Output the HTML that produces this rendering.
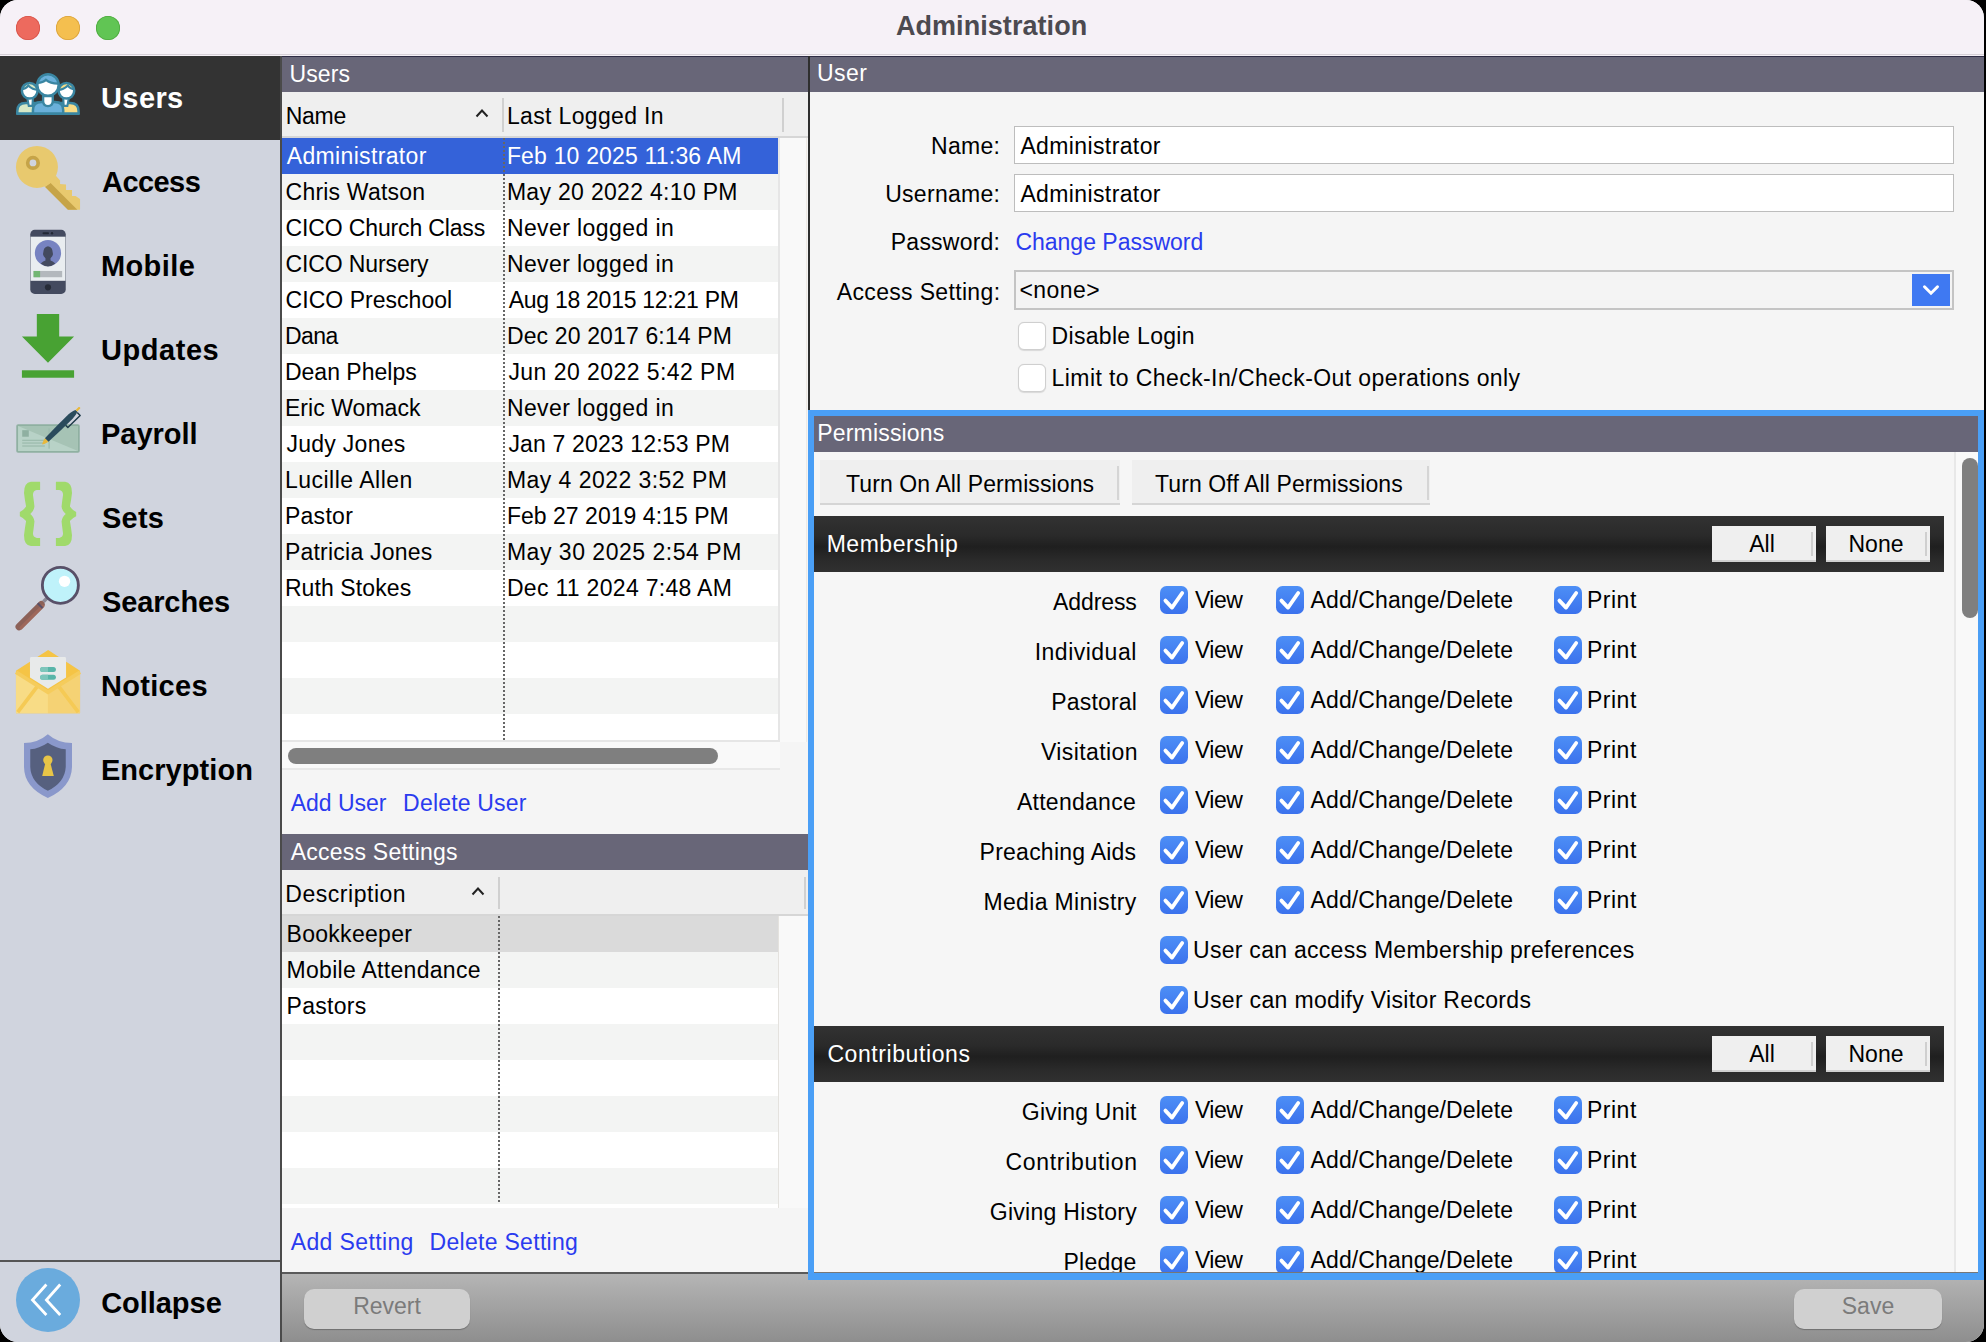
<!DOCTYPE html><html><head><meta charset="utf-8"><style>
*{margin:0;padding:0;box-sizing:border-box}
html,body{width:1986px;height:1342px;overflow:hidden;background:#000}
body{font-family:"Liberation Sans",sans-serif;position:relative}
#win{position:absolute;left:0;top:0;width:1984px;height:1342px;border-radius:18px;overflow:hidden;background:#f5f5f5}
.t{position:absolute;white-space:nowrap}
.r{position:absolute}
svg{position:absolute;overflow:visible}
</style></head><body><div id="win">
<div class="r" style="left:0px;top:0px;width:1984px;height:54px;background:#f6f1f7;"></div>
<div class="r" style="left:0px;top:54px;width:1984px;height:1px;background:#d6d0d7;"></div>
<div class="r" style="left:0px;top:55px;width:1984px;height:1px;background:#f6f1f7;"></div>
<div class="r" style="left:16px;top:16px;width:24px;height:24px;border-radius:50%;background:#ed6a5e;box-shadow:inset 0 0 0 0.8px #d6544a"></div>
<div class="r" style="left:56px;top:16px;width:24px;height:24px;border-radius:50%;background:#f4bf4f;box-shadow:inset 0 0 0 0.8px #d9a23c"></div>
<div class="r" style="left:96px;top:16px;width:24px;height:24px;border-radius:50%;background:#61c554;box-shadow:inset 0 0 0 0.8px #4ea93f"></div>
<div class="t" style="left:895.895652173913px;top:13.1px;font-size:27px;line-height:27px;color:#4c4a50;font-weight:bold;letter-spacing:0.065px;">Administration</div>
<div class="r" style="left:0px;top:56px;width:280px;height:1286px;background:#d0d4de;"></div>
<div class="r" style="left:0px;top:56px;width:280px;height:84px;background:#333333;"></div>
<div class="r" style="left:280px;top:56px;width:2px;height:1286px;background:#4a4a4a;"></div>
<div class="r" style="left:0px;top:1260px;width:280px;height:2px;background:#555555;"></div>
<div class="t" style="left:101.03478260869565px;top:83.9px;font-size:29px;line-height:29px;color:#fff;font-weight:bold;letter-spacing:0.389px;">Users</div>
<div class="t" style="left:102.04347826086956px;top:167.9px;font-size:29px;line-height:29px;color:#000;font-weight:bold;letter-spacing:-0.562px;">Access</div>
<div class="t" style="left:100.9086956521739px;top:251.9px;font-size:29px;line-height:29px;color:#000;font-weight:bold;letter-spacing:0.422px;">Mobile</div>
<div class="t" style="left:101.03478260869565px;top:335.9px;font-size:29px;line-height:29px;color:#000;font-weight:bold;letter-spacing:0.54px;">Updates</div>
<div class="t" style="left:100.9086956521739px;top:419.9px;font-size:29px;line-height:29px;color:#000;font-weight:bold;">Payroll</div>
<div class="t" style="left:101.91739130434782px;top:503.9px;font-size:29px;line-height:29px;color:#000;font-weight:bold;letter-spacing:0.255px;">Sets</div>
<div class="t" style="left:101.91739130434782px;top:587.9px;font-size:29px;line-height:29px;color:#000;font-weight:bold;letter-spacing:-0.106px;">Searches</div>
<div class="t" style="left:100.9086956521739px;top:671.9px;font-size:29px;line-height:29px;color:#000;font-weight:bold;letter-spacing:0.329px;">Notices</div>
<div class="t" style="left:100.9086956521739px;top:755.9px;font-size:29px;line-height:29px;color:#000;font-weight:bold;letter-spacing:0.058px;">Encryption</div>
<div class="t" style="left:101.16521739130434px;top:1288.9px;font-size:29px;line-height:29px;color:#000;font-weight:bold;letter-spacing:-0.039px;">Collapse</div>
<svg style="left:10px;top:60px" width="80" height="70" viewBox="0 0 1534 1342">
<defs>
<clipPath id="hl"><circle cx="378" cy="590" r="150"/></clipPath>
<clipPath id="hr"><circle cx="1082" cy="590" r="150"/></clipPath>
<clipPath id="hc"><circle cx="728" cy="480" r="205"/></clipPath>
</defs>
<path d="M140 1030 L140 980 Q140 825 300 825 L520 825 L520 1030 Z" fill="#d6e8c6" stroke="#3a86a2" stroke-width="48" stroke-linejoin="round"/>
<path d="M1315 1030 L1315 980 Q1315 825 1155 825 L940 825 L940 1030 Z" fill="#f8dc86" stroke="#3a86a2" stroke-width="48" stroke-linejoin="round"/>
<path d="M330 720 L360 880 L430 880 L440 720 Z" fill="#fff" stroke="#3a86a2" stroke-width="40"/>
<path d="M1130 720 L1100 880 L1030 880 L1020 720 Z" fill="#fff" stroke="#3a86a2" stroke-width="40"/>
<circle cx="378" cy="590" r="150" fill="#fff"/>
<path clip-path="url(#hl)" d="M200 300 L560 300 L560 575 Q440 580 350 490 Q300 560 200 560 Z" fill="#d6e8c6" stroke="#3a86a2" stroke-width="40"/>
<circle cx="378" cy="590" r="150" fill="none" stroke="#3a86a2" stroke-width="48"/>
<circle cx="1082" cy="590" r="150" fill="#fff"/>
<path clip-path="url(#hr)" d="M900 300 L1260 300 L1260 560 Q1160 560 1110 490 Q1020 580 900 575 Z" fill="#f8dc86" stroke="#3a86a2" stroke-width="40"/>
<circle cx="1082" cy="590" r="150" fill="none" stroke="#3a86a2" stroke-width="48"/>
<path d="M440 1030 L440 960 Q440 805 600 805 L860 805 Q1020 805 1020 960 L1020 1030 Z" fill="#6ab0da" stroke="#3a86a2" stroke-width="48" stroke-linejoin="round"/>
<path d="M635 690 L635 790 Q640 880 728 885 Q815 880 820 790 L820 690 Z" fill="#fff" stroke="#3a86a2" stroke-width="45"/>
<circle cx="728" cy="480" r="205" fill="#fff"/>
<path clip-path="url(#hc)" d="M500 250 L960 250 L960 450 Q780 460 690 380 Q640 440 500 440 Z" fill="#6ab0da" stroke="#3a86a2" stroke-width="42"/>
<circle cx="728" cy="480" r="205" fill="none" stroke="#3a86a2" stroke-width="48"/>
<rect x="115" y="1005" width="1225" height="45" rx="20" fill="#3a86a2"/>
</svg>
<svg style="left:10px;top:140px" width="80" height="80" viewBox="0 0 1342 1342">
<path d="M560 760 L980 1170 L1175 1170 L1175 990 L1100 940 L1040 940 L1040 840 L940 840 L940 745 L840 740 L840 680 L770 600 Z" fill="#e8c96e"/>
<path d="M590 790 L680 720 L1130 1170 L970 1170 Z" fill="#c6a448"/>
<circle cx="452" cy="452" r="352" fill="#e8c96e"/>
<circle cx="385" cy="385" r="88" fill="#d0d4de" stroke="#c6a448" stroke-width="62"/>
</svg>
<svg style="left:10px;top:220px" width="80" height="80" viewBox="0 0 1342 1342">
<rect x="340" y="165" width="595" height="1075" rx="75" fill="#434a5f"/>
<rect x="345" y="280" width="585" height="740" fill="#e9edf0"/>
<rect x="545" y="205" width="110" height="35" rx="17" fill="#222835"/>
<circle cx="705" cy="222" r="20" fill="#222835"/>
<circle cx="637" cy="555" r="220" fill="#7783c1"/>
<path d="M515 730 Q560 690 595 680 L595 640 Q550 610 555 560 Q560 450 637 440 Q715 450 720 560 Q725 610 680 640 L680 680 Q715 690 760 730 Q700 780 637 780 Q575 780 515 730 Z" fill="#434a5f"/>
<rect x="395" y="855" width="480" height="105" fill="#b3b8bd"/>
<rect x="395" y="855" width="110" height="105" fill="#72b673"/>
<circle cx="637" cy="1130" r="52" fill="#262b37"/>
</svg>
<svg style="left:10px;top:305px" width="80" height="80" viewBox="0 0 1342 1342">
<path d="M450 150 L825 150 L825 530 L1075 530 L637 970 L200 530 L450 530 Z" fill="#48a233"/>
<rect x="200" y="1095" width="875" height="125" fill="#48a233"/>
</svg>
<svg style="left:10px;top:395px" width="80" height="80" viewBox="0 0 1342 1342">
<rect x="105" y="490" width="1065" height="480" rx="30" fill="#8fb0a1"/>
<rect x="135" y="520" width="1005" height="420" fill="#b8d2c7"/>
<path d="M135 520 L1140 520 L1140 940 Z" fill="#a6c3b5"/>
<rect x="205" y="590" width="110" height="110" fill="#8fb0a1"/>
<rect x="205" y="750" width="380" height="22" fill="#9dbcae"/>
<rect x="205" y="795" width="380" height="22" fill="#9dbcae"/>
<rect x="205" y="845" width="380" height="22" fill="#9dbcae"/>
<rect x="645" y="560" width="22" height="340" fill="#9dbcae"/>
<g transform="translate(615,755) rotate(-44.5)">
<path d="M400 45 L400 100 L690 100 L690 30" fill="none" stroke="#1f3a49" stroke-width="24" stroke-linejoin="round"/>
<path d="M0 -42 Q300 -55 560 -52 Q660 -45 700 -20 L700 20 Q660 45 560 52 Q300 55 0 42 Z" fill="#2a4b5c"/>
<path d="M0 -42 Q-60 -30 -100 -5 L-100 5 Q-60 30 0 42 Z" fill="#e8b83a"/>
<path d="M700 -20 L770 -18 Q800 0 770 18 L700 20 Z" fill="#e8b83a"/>
</g>
</svg>
<svg style="left:10px;top:475px" width="80" height="80" viewBox="0 0 1342 1342">
<path d="M505 115 L350 115 Q235 130 235 300 Q250 430 270 530 Q230 590 165 620 L165 690 Q230 720 270 770 Q250 880 235 1010 Q235 1180 350 1190 L505 1190 L505 1055 L450 1055 Q385 1040 385 980 Q400 880 410 780 Q400 700 340 655 Q400 610 410 530 Q400 430 385 330 Q385 260 450 250 L505 250 Z" fill="#a0da6b"/>
<path d="M770 115 L925 115 Q1040 130 1040 300 Q1025 430 1005 530 Q1045 590 1110 620 L1110 690 Q1045 720 1005 770 Q1025 880 1040 1010 Q1040 1180 925 1190 L770 1190 L770 1055 L825 1055 Q890 1040 890 980 Q875 880 865 780 Q875 700 935 655 Q875 610 865 530 Q875 430 890 330 Q890 260 825 250 L770 250 Z" fill="#a0da6b"/>
</svg>
<svg style="left:10px;top:560px" width="80" height="80" viewBox="0 0 1342 1342">
<line x1="560" y1="700" x2="640" y2="620" stroke="#8c8a97" stroke-width="60"/>
<line x1="150" y1="1120" x2="525" y2="745" stroke="#8c6158" stroke-width="115" stroke-linecap="round"/>
<line x1="185" y1="1140" x2="550" y2="775" stroke="#9e685b" stroke-width="55" stroke-linecap="round"/>
<line x1="465" y1="725" x2="545" y2="805" stroke="#585068" stroke-width="35"/>
<circle cx="845" cy="425" r="302" fill="#bff2fa" stroke="#585068" stroke-width="48"/>
<circle cx="915" cy="358" r="95" fill="#fff"/>
</svg>
<svg style="left:10px;top:645px" width="80" height="80" viewBox="0 0 1342 1342">
<defs><clipPath id="pl"><rect x="0" y="0" width="637" height="1342"/></clipPath></defs>
<path d="M100 430 L640 85 L1175 430 L1175 1145 L100 1145 Z" fill="#f5c445"/>
<path d="M335 225 Q335 200 360 200 L915 200 Q940 200 940 225 L940 545 L637 735 L335 545 Z" fill="#e8eaea"/>
<rect x="505" y="370" width="265" height="85" rx="42" fill="#58b5a8"/>
<rect x="505" y="500" width="265" height="85" rx="42" fill="#58b5a8"/>
<g clip-path="url(#pl)"><rect x="505" y="370" width="265" height="85" rx="42" fill="#7dc6bb"/><rect x="505" y="500" width="265" height="85" rx="42" fill="#7dc6bb"/></g>
<path d="M100 445 L637 800 L637 1145 L100 1145 Z" fill="#f8dc86"/>
<path d="M637 800 L1175 445 L1175 1145 L637 1145 Z" fill="#f5d274"/>
<path d="M130 1125 L455 700 M1145 1125 L820 700" fill="none" stroke="#f5ca55" stroke-width="62"/>
<path d="M100 455 L637 795 L1175 455" fill="none" stroke="#f5cc5c" stroke-width="62"/>
</svg>
<svg style="left:10px;top:730px" width="80" height="80" viewBox="0 0 1342 1342">
<path d="M635 70 Q470 215 235 220 L235 620 Q240 960 635 1140 Q1030 960 1040 620 L1040 220 Q800 215 635 70 Z" fill="#8a98cb"/>
<path d="M635 215 Q490 315 340 325 L340 620 Q350 880 635 1020 Q920 880 935 620 L935 325 Q780 315 635 215 Z" fill="#56607f"/>
<circle cx="635" cy="505" r="78" fill="#e8c547"/>
<path d="M595 545 L675 545 L735 770 L540 770 Z" fill="#e8c547"/>
</svg>
<svg style="left:16px;top:1268px" width="64" height="64" viewBox="0 0 64 64">
<circle cx="32" cy="32" r="32" fill="#6aabdd"/>
<path d="M30.4 16.5 L16.5 32 L30.4 47 M44.2 16.5 L30.4 32 L44.2 47" fill="none" stroke="#fff" stroke-width="2.8"/>
</svg>
<div class="r" style="left:282px;top:56px;width:526px;height:1216px;background:#f5f5f5;"></div>
<div class="r" style="left:282px;top:56px;width:526px;height:1px;background:#2f2c45;"></div>
<div class="r" style="left:282px;top:57px;width:526px;height:35px;background:#686678;"></div>
<div class="t" style="left:289.4px;top:62.5px;font-size:23px;line-height:23px;color:#fff;letter-spacing:0.15px;">Users</div>
<div class="r" style="left:282px;top:92px;width:526px;height:44px;background:#efefef;"></div>
<div class="r" style="left:282px;top:136px;width:526px;height:2px;background:#d6d6d6;"></div>
<div class="r" style="left:502px;top:98px;width:2px;height:34px;background:#d0d0d0;"></div>
<div class="r" style="left:782px;top:98px;width:2px;height:34px;background:#d0d0d0;"></div>
<div class="t" style="left:285.8px;top:104.5px;font-size:23px;line-height:23px;color:#000;letter-spacing:-0.3px;">Name</div>
<div class="t" style="left:507.0px;top:104.5px;font-size:23px;line-height:23px;color:#000;letter-spacing:0.331px;">Last Logged In</div>
<svg style="left:475px;top:108px" width="14" height="10" viewBox="0 0 14 10"><path d="M1.5 8.5 L7 2.5 L12.5 8.5" fill="none" stroke="#222" stroke-width="2"/></svg>
<div class="r" style="left:282px;top:138px;width:496px;height:602px;background:#ffffff;"></div>
<div class="r" style="left:780px;top:138px;width:27px;height:604px;background:#f9f9f9;"></div>
<div class="r" style="left:806px;top:138px;width:1px;height:604px;background:#eeeae5;"></div>
<div class="r" style="left:282px;top:138px;width:496px;height:36px;background:#3462d9;"></div>
<div class="t" style="left:286.7px;top:144.9px;font-size:23px;line-height:23px;color:#fff;letter-spacing:0.35px;">Administrator</div>
<div class="t" style="left:506.90000000000003px;top:144.9px;font-size:23px;line-height:23px;color:#fff;letter-spacing:0.179px;">Feb 10 2025 11:36 AM</div>
<div class="r" style="left:282px;top:174px;width:496px;height:36px;background:#f3f4f3;"></div>
<div class="t" style="left:285.6px;top:180.9px;font-size:23px;line-height:23px;color:#000;letter-spacing:0.2px;">Chris Watson</div>
<div class="t" style="left:506.90000000000003px;top:180.9px;font-size:23px;line-height:23px;color:#000;letter-spacing:0.311px;">May 20 2022 4:10 PM</div>
<div class="r" style="left:282px;top:210px;width:496px;height:36px;background:#ffffff;"></div>
<div class="t" style="left:285.6px;top:216.9px;font-size:23px;line-height:23px;color:#000;letter-spacing:-0.144px;">CICO Church Class</div>
<div class="t" style="left:506.90000000000003px;top:216.9px;font-size:23px;line-height:23px;color:#000;letter-spacing:0.407px;">Never logged in</div>
<div class="r" style="left:282px;top:246px;width:496px;height:36px;background:#f3f4f3;"></div>
<div class="t" style="left:285.6px;top:252.9px;font-size:23px;line-height:23px;color:#000;letter-spacing:-0.127px;">CICO Nursery</div>
<div class="t" style="left:506.90000000000003px;top:252.9px;font-size:23px;line-height:23px;color:#000;letter-spacing:0.407px;">Never logged in</div>
<div class="r" style="left:282px;top:282px;width:496px;height:36px;background:#ffffff;"></div>
<div class="t" style="left:285.6px;top:288.9px;font-size:23px;line-height:23px;color:#000;letter-spacing:0.031px;">CICO Preschool</div>
<div class="t" style="left:508.7px;top:288.9px;font-size:23px;line-height:23px;color:#000;letter-spacing:-0.268px;">Aug 18 2015 12:21 PM</div>
<div class="r" style="left:282px;top:318px;width:496px;height:36px;background:#f3f4f3;"></div>
<div class="t" style="left:284.90000000000003px;top:324.9px;font-size:23px;line-height:23px;color:#000;letter-spacing:-0.5px;">Dana</div>
<div class="t" style="left:506.90000000000003px;top:324.9px;font-size:23px;line-height:23px;color:#000;letter-spacing:0.144px;">Dec 20 2017 6:14 PM</div>
<div class="r" style="left:282px;top:354px;width:496px;height:36px;background:#ffffff;"></div>
<div class="t" style="left:284.90000000000003px;top:360.9px;font-size:23px;line-height:23px;color:#000;letter-spacing:0.02px;">Dean Phelps</div>
<div class="t" style="left:508.40000000000003px;top:360.9px;font-size:23px;line-height:23px;color:#000;letter-spacing:0.444px;">Jun 20 2022 5:42 PM</div>
<div class="r" style="left:282px;top:390px;width:496px;height:36px;background:#f3f4f3;"></div>
<div class="t" style="left:284.90000000000003px;top:396.9px;font-size:23px;line-height:23px;color:#000;letter-spacing:0.06px;">Eric Womack</div>
<div class="t" style="left:506.90000000000003px;top:396.9px;font-size:23px;line-height:23px;color:#000;letter-spacing:0.407px;">Never logged in</div>
<div class="r" style="left:282px;top:426px;width:496px;height:36px;background:#ffffff;"></div>
<div class="t" style="left:286.40000000000003px;top:432.9px;font-size:23px;line-height:23px;color:#000;letter-spacing:0.289px;">Judy Jones</div>
<div class="t" style="left:508.40000000000003px;top:432.9px;font-size:23px;line-height:23px;color:#000;letter-spacing:0.161px;">Jan 7 2023 12:53 PM</div>
<div class="r" style="left:282px;top:462px;width:496px;height:36px;background:#f3f4f3;"></div>
<div class="t" style="left:284.90000000000003px;top:468.9px;font-size:23px;line-height:23px;color:#000;letter-spacing:0.5px;">Lucille Allen</div>
<div class="t" style="left:506.90000000000003px;top:468.9px;font-size:23px;line-height:23px;color:#000;letter-spacing:0.459px;">May 4 2022 3:52 PM</div>
<div class="r" style="left:282px;top:498px;width:496px;height:36px;background:#ffffff;"></div>
<div class="t" style="left:284.90000000000003px;top:504.9px;font-size:23px;line-height:23px;color:#000;letter-spacing:0.3px;">Pastor</div>
<div class="t" style="left:506.90000000000003px;top:504.9px;font-size:23px;line-height:23px;color:#000;letter-spacing:0.033px;">Feb 27 2019 4:15 PM</div>
<div class="r" style="left:282px;top:534px;width:496px;height:36px;background:#f3f4f3;"></div>
<div class="t" style="left:284.90000000000003px;top:540.9px;font-size:23px;line-height:23px;color:#000;letter-spacing:0.231px;">Patricia Jones</div>
<div class="t" style="left:506.90000000000003px;top:540.9px;font-size:23px;line-height:23px;color:#000;letter-spacing:0.522px;">May 30 2025 2:54 PM</div>
<div class="r" style="left:282px;top:570px;width:496px;height:36px;background:#ffffff;"></div>
<div class="t" style="left:284.90000000000003px;top:576.9px;font-size:23px;line-height:23px;color:#000;letter-spacing:0.1px;">Ruth Stokes</div>
<div class="t" style="left:506.90000000000003px;top:576.9px;font-size:23px;line-height:23px;color:#000;letter-spacing:0.306px;">Dec 11 2024 7:48 AM</div>
<div class="r" style="left:282px;top:606px;width:496px;height:36px;background:#f3f4f3;"></div>
<div class="r" style="left:282px;top:642px;width:496px;height:36px;background:#ffffff;"></div>
<div class="r" style="left:282px;top:678px;width:496px;height:36px;background:#f3f4f3;"></div>
<div class="r" style="left:282px;top:714px;width:496px;height:26px;background:#ffffff;"></div>
<div class="r" style="left:503px;top:138px;width:2px;height:602px;background:repeating-linear-gradient(to bottom,#666 0 2px,transparent 2px 4px)"></div>
<div class="r" style="left:778px;top:138px;width:2px;height:604px;background:#e6e6e6;"></div>
<div class="r" style="left:282px;top:740px;width:498px;height:2px;background:#e6e6e6;"></div>
<div class="r" style="left:282px;top:742px;width:498px;height:26px;background:#f9f9f9;"></div>
<div class="r" style="left:282px;top:768px;width:498px;height:2px;background:#e8e8e8;"></div>
<div class="r" style="left:288px;top:748px;width:430px;height:16px;border-radius:8px;background:#7f7f7f"></div>
<div class="t" style="left:290.79999999999995px;top:792.0px;font-size:23px;line-height:23px;color:#2a3bef;letter-spacing:-0.043px;">Add User</div>
<div class="t" style="left:403.1px;top:792.0px;font-size:23px;line-height:23px;color:#2a3bef;letter-spacing:0.19px;">Delete User</div>
<div class="r" style="left:282px;top:834px;width:526px;height:36px;background:#686678;"></div>
<div class="t" style="left:290.79999999999995px;top:840.5px;font-size:23px;line-height:23px;color:#fff;letter-spacing:0.221px;">Access Settings</div>
<div class="r" style="left:282px;top:870px;width:526px;height:44px;background:#efefef;"></div>
<div class="r" style="left:282px;top:914px;width:526px;height:2px;background:#d6d6d6;"></div>
<div class="r" style="left:498px;top:877px;width:2px;height:32px;background:#d0d0d0;"></div>
<div class="r" style="left:804px;top:877px;width:2px;height:32px;background:#d0d0d0;"></div>
<div class="t" style="left:285.3px;top:882.5px;font-size:23px;line-height:23px;color:#000;letter-spacing:0.53px;">Description</div>
<svg style="left:471px;top:886px" width="14" height="10" viewBox="0 0 14 10"><path d="M1.5 8.5 L7 2.5 L12.5 8.5" fill="none" stroke="#222" stroke-width="2"/></svg>
<div class="r" style="left:282px;top:916px;width:496px;height:290px;background:#ffffff;"></div>
<div class="r" style="left:778px;top:916px;width:30px;height:292px;background:#f9f9f9;"></div>
<div class="r" style="left:778px;top:916px;width:1px;height:292px;background:#e4e2de;"></div>
<div class="r" style="left:282px;top:916px;width:496px;height:36px;background:#dadada;"></div>
<div class="t" style="left:286.5px;top:923.2px;font-size:23px;line-height:23px;color:#000;letter-spacing:0.3px;">Bookkeeper</div>
<div class="r" style="left:282px;top:952px;width:496px;height:36px;background:#f3f4f3;"></div>
<div class="t" style="left:286.5px;top:959.2px;font-size:23px;line-height:23px;color:#000;letter-spacing:0.3px;">Mobile Attendance</div>
<div class="r" style="left:282px;top:988px;width:496px;height:36px;background:#ffffff;"></div>
<div class="t" style="left:286.5px;top:995.2px;font-size:23px;line-height:23px;color:#000;letter-spacing:0.3px;">Pastors</div>
<div class="r" style="left:282px;top:1024px;width:496px;height:36px;background:#f3f4f3;"></div>
<div class="r" style="left:282px;top:1060px;width:496px;height:36px;background:#ffffff;"></div>
<div class="r" style="left:282px;top:1096px;width:496px;height:36px;background:#f3f4f3;"></div>
<div class="r" style="left:282px;top:1132px;width:496px;height:36px;background:#ffffff;"></div>
<div class="r" style="left:282px;top:1168px;width:496px;height:36px;background:#f3f4f3;"></div>
<div class="r" style="left:498px;top:916px;width:2px;height:290px;background:repeating-linear-gradient(to bottom,#666 0 2px,transparent 2px 4px)"></div>
<div class="r" style="left:282px;top:1204px;width:496px;height:4px;background:#ffffff;"></div>
<div class="t" style="left:290.7px;top:1230.5px;font-size:23px;line-height:23px;color:#2a3bef;letter-spacing:0.38px;">Add Setting</div>
<div class="t" style="left:429.5px;top:1230.5px;font-size:23px;line-height:23px;color:#2a3bef;letter-spacing:0.3px;">Delete Setting</div>
<div class="r" style="left:808px;top:56px;width:2px;height:354px;background:#2e2e2e;"></div>
<div class="r" style="left:810px;top:56px;width:1174px;height:1px;background:#2f2c45;"></div>
<div class="r" style="left:810px;top:57px;width:1174px;height:35px;background:#686678;"></div>
<div class="t" style="left:816.9000000000001px;top:62.2px;font-size:23px;line-height:23px;color:#fff;letter-spacing:0.467px;">User</div>
<div class="r" style="left:810px;top:92px;width:1174px;height:318px;background:#f5f5f5;"></div>
<div class="t" style="left:931.0px;top:134.7px;font-size:23px;line-height:23px;color:#000;letter-spacing:0.3px;">Name:</div>
<div class="t" style="left:885.2px;top:183.1px;font-size:23px;line-height:23px;color:#000;letter-spacing:0.287px;">Username:</div>
<div class="t" style="left:890.8000000000001px;top:230.5px;font-size:23px;line-height:23px;color:#000;letter-spacing:0.225px;">Password:</div>
<div class="t" style="left:836.8px;top:280.5px;font-size:23px;line-height:23px;color:#000;letter-spacing:0.336px;">Access Setting:</div>
<div class="r" style="left:1014px;top:126px;width:940px;height:38px;background:#fff;border:1.5px solid #bdbdbd"></div>
<div class="r" style="left:1014px;top:174px;width:940px;height:38px;background:#fff;border:1.5px solid #bdbdbd"></div>
<div class="t" style="left:1020.4px;top:134.7px;font-size:23px;line-height:23px;color:#000;letter-spacing:0.383px;">Administrator</div>
<div class="t" style="left:1020.4px;top:183.1px;font-size:23px;line-height:23px;color:#000;letter-spacing:0.383px;">Administrator</div>
<div class="t" style="left:1015.4px;top:230.5px;font-size:23px;line-height:23px;color:#2a3bef;letter-spacing:-0.007px;">Change Password</div>
<div class="r" style="left:1014px;top:270px;width:940px;height:40px;background:#f4f4f4;border:2px solid #c4c4c4"></div>
<div class="t" style="left:1019.4px;top:278.5px;font-size:23px;line-height:23px;color:#000;letter-spacing:0.44px;">&lt;none&gt;</div>
<div class="r" style="left:1912px;top:274px;width:38px;height:32px;background:#3f79f2;"></div>
<svg style="left:1912px;top:274px" width="38" height="32" viewBox="0 0 38 32"><path d="M12.5 12.8 L19 19.2 L25.5 12.8" fill="none" stroke="#fff" stroke-width="3" stroke-linecap="round"/></svg>
<div class="r" style="left:1018px;top:322px;width:28px;height:28px;border-radius:6px;background:#fff;border:1px solid #cfcfcf;box-shadow:0 0.5px 1px rgba(0,0,0,0.12)"></div>
<div class="t" style="left:1051.6px;top:325.0px;font-size:23px;line-height:23px;color:#000;letter-spacing:0.3px;">Disable Login</div>
<div class="r" style="left:1018px;top:364px;width:28px;height:28px;border-radius:6px;background:#fff;border:1px solid #cfcfcf;box-shadow:0 0.5px 1px rgba(0,0,0,0.12)"></div>
<div class="t" style="left:1051.6px;top:367.0px;font-size:23px;line-height:23px;color:#000;letter-spacing:0.41px;">Limit to Check-In/Check-Out operations only</div>
<div class="r" style="left:808px;top:410px;width:1176px;height:870px;background:#4a9ff6;"></div>
<div class="r" style="left:814px;top:416px;width:1164px;height:36px;background:#686678;"></div>
<div class="t" style="left:817.3000000000001px;top:422.2px;font-size:23px;line-height:23px;color:#fff;letter-spacing:0.17px;">Permissions</div>
<div class="r" style="left:814px;top:452px;width:1164px;height:820px;background:#f6f6f6;"></div>
<div class="r" style="left:1956px;top:452px;width:22px;height:820px;background:#f9f9f9;"></div>
<div class="r" style="left:1954px;top:452px;width:2px;height:820px;background:#e8e8e8;"></div>
<div class="r" style="left:1962px;top:458px;width:16px;height:160px;border-radius:8px;background:#7f7f7f"></div>
<div class="r" style="left:820px;top:460px;width:300px;height:45px;background:#efefef;"></div>
<div class="r" style="left:820px;top:503px;width:300px;height:2px;background:#d5d5d5;"></div>
<div class="r" style="left:1117px;top:466px;width:2px;height:34px;background:#d5d5d5;"></div>
<div class="t" style="left:846px;top:472.5px;font-size:23px;line-height:23px;color:#000;letter-spacing:0.1px;">Turn On All Permissions</div>
<div class="r" style="left:1132px;top:460px;width:298px;height:45px;background:#efefef;"></div>
<div class="r" style="left:1132px;top:503px;width:298px;height:2px;background:#d5d5d5;"></div>
<div class="r" style="left:1427px;top:466px;width:2px;height:34px;background:#d5d5d5;"></div>
<div class="t" style="left:1155px;top:472.5px;font-size:23px;line-height:23px;color:#000;letter-spacing:0.1px;">Turn Off All Permissions</div>
<div class="r" style="left:814px;top:516px;width:1130px;height:56px;background:linear-gradient(to bottom,#323232 0%,#2a2a2a 35%,#1f1f1f 55%,#2b2b2b 80%,#303030 100%)"></div>
<div class="t" style="left:826.7px;top:532.9px;font-size:23px;line-height:23px;color:#fff;letter-spacing:0.511px;">Membership</div>
<div class="r" style="left:1712px;top:526px;width:104px;height:36px;background:#efefef;"></div>
<div class="r" style="left:1712px;top:560px;width:104px;height:2px;background:#d0d0d0;"></div>
<div class="r" style="left:1811px;top:532px;width:2px;height:24px;background:#cfcfcf;"></div>
<div class="t" style="left:1362.0px;width:800px;text-align:center;top:532.9px;font-size:23px;line-height:23px;color:#000;">All</div>
<div class="r" style="left:1826px;top:526px;width:104px;height:36px;background:#efefef;"></div>
<div class="r" style="left:1826px;top:560px;width:104px;height:2px;background:#d0d0d0;"></div>
<div class="r" style="left:1925px;top:532px;width:2px;height:24px;background:#cfcfcf;"></div>
<div class="t" style="left:1476.0px;width:800px;text-align:center;top:532.9px;font-size:23px;line-height:23px;color:#000;">None</div>
<div class="t" style="left:1053.1000000000001px;top:590.5px;font-size:23px;line-height:23px;color:#000;letter-spacing:-0.1px;">Address</div>
<svg style="left:1160px;top:586px" width="28" height="28" viewBox="0 0 28 28"><defs><linearGradient id="g" x1="0" y1="0" x2="0" y2="1"><stop offset="0" stop-color="#4d8ff6"/><stop offset="1" stop-color="#3b72ed"/></linearGradient></defs><rect x="0" y="0" width="28" height="28" rx="6.5" fill="url(#g)"/><path d="M5.4 14.6 L12 21.6 L22.2 7" fill="none" stroke="#fff" stroke-width="3.8" stroke-linecap="round" stroke-linejoin="round"/></svg>
<div class="t" style="left:1194.9px;top:588.7px;font-size:23px;line-height:23px;color:#000;letter-spacing:-0.467px;">View</div>
<svg style="left:1276px;top:586px" width="28" height="28" viewBox="0 0 28 28"><defs><linearGradient id="g" x1="0" y1="0" x2="0" y2="1"><stop offset="0" stop-color="#4d8ff6"/><stop offset="1" stop-color="#3b72ed"/></linearGradient></defs><rect x="0" y="0" width="28" height="28" rx="6.5" fill="url(#g)"/><path d="M5.4 14.6 L12 21.6 L22.2 7" fill="none" stroke="#fff" stroke-width="3.8" stroke-linecap="round" stroke-linejoin="round"/></svg>
<div class="t" style="left:1310.6000000000001px;top:588.7px;font-size:23px;line-height:23px;color:#000;letter-spacing:0.106px;">Add/Change/Delete</div>
<svg style="left:1554px;top:586px" width="28" height="28" viewBox="0 0 28 28"><defs><linearGradient id="g" x1="0" y1="0" x2="0" y2="1"><stop offset="0" stop-color="#4d8ff6"/><stop offset="1" stop-color="#3b72ed"/></linearGradient></defs><rect x="0" y="0" width="28" height="28" rx="6.5" fill="url(#g)"/><path d="M5.4 14.6 L12 21.6 L22.2 7" fill="none" stroke="#fff" stroke-width="3.8" stroke-linecap="round" stroke-linejoin="round"/></svg>
<div class="t" style="left:1586.8999999999999px;top:588.7px;font-size:23px;line-height:23px;color:#000;letter-spacing:0.525px;">Print</div>
<div class="t" style="left:1034.7px;top:640.5px;font-size:23px;line-height:23px;color:#000;letter-spacing:0.489px;">Individual</div>
<svg style="left:1160px;top:636px" width="28" height="28" viewBox="0 0 28 28"><defs><linearGradient id="g" x1="0" y1="0" x2="0" y2="1"><stop offset="0" stop-color="#4d8ff6"/><stop offset="1" stop-color="#3b72ed"/></linearGradient></defs><rect x="0" y="0" width="28" height="28" rx="6.5" fill="url(#g)"/><path d="M5.4 14.6 L12 21.6 L22.2 7" fill="none" stroke="#fff" stroke-width="3.8" stroke-linecap="round" stroke-linejoin="round"/></svg>
<div class="t" style="left:1194.9px;top:638.7px;font-size:23px;line-height:23px;color:#000;letter-spacing:-0.467px;">View</div>
<svg style="left:1276px;top:636px" width="28" height="28" viewBox="0 0 28 28"><defs><linearGradient id="g" x1="0" y1="0" x2="0" y2="1"><stop offset="0" stop-color="#4d8ff6"/><stop offset="1" stop-color="#3b72ed"/></linearGradient></defs><rect x="0" y="0" width="28" height="28" rx="6.5" fill="url(#g)"/><path d="M5.4 14.6 L12 21.6 L22.2 7" fill="none" stroke="#fff" stroke-width="3.8" stroke-linecap="round" stroke-linejoin="round"/></svg>
<div class="t" style="left:1310.6000000000001px;top:638.7px;font-size:23px;line-height:23px;color:#000;letter-spacing:0.106px;">Add/Change/Delete</div>
<svg style="left:1554px;top:636px" width="28" height="28" viewBox="0 0 28 28"><defs><linearGradient id="g" x1="0" y1="0" x2="0" y2="1"><stop offset="0" stop-color="#4d8ff6"/><stop offset="1" stop-color="#3b72ed"/></linearGradient></defs><rect x="0" y="0" width="28" height="28" rx="6.5" fill="url(#g)"/><path d="M5.4 14.6 L12 21.6 L22.2 7" fill="none" stroke="#fff" stroke-width="3.8" stroke-linecap="round" stroke-linejoin="round"/></svg>
<div class="t" style="left:1586.8999999999999px;top:638.7px;font-size:23px;line-height:23px;color:#000;letter-spacing:0.525px;">Print</div>
<div class="t" style="left:1051.3px;top:690.5px;font-size:23px;line-height:23px;color:#000;letter-spacing:0.157px;">Pastoral</div>
<svg style="left:1160px;top:686px" width="28" height="28" viewBox="0 0 28 28"><defs><linearGradient id="g" x1="0" y1="0" x2="0" y2="1"><stop offset="0" stop-color="#4d8ff6"/><stop offset="1" stop-color="#3b72ed"/></linearGradient></defs><rect x="0" y="0" width="28" height="28" rx="6.5" fill="url(#g)"/><path d="M5.4 14.6 L12 21.6 L22.2 7" fill="none" stroke="#fff" stroke-width="3.8" stroke-linecap="round" stroke-linejoin="round"/></svg>
<div class="t" style="left:1194.9px;top:688.7px;font-size:23px;line-height:23px;color:#000;letter-spacing:-0.467px;">View</div>
<svg style="left:1276px;top:686px" width="28" height="28" viewBox="0 0 28 28"><defs><linearGradient id="g" x1="0" y1="0" x2="0" y2="1"><stop offset="0" stop-color="#4d8ff6"/><stop offset="1" stop-color="#3b72ed"/></linearGradient></defs><rect x="0" y="0" width="28" height="28" rx="6.5" fill="url(#g)"/><path d="M5.4 14.6 L12 21.6 L22.2 7" fill="none" stroke="#fff" stroke-width="3.8" stroke-linecap="round" stroke-linejoin="round"/></svg>
<div class="t" style="left:1310.6000000000001px;top:688.7px;font-size:23px;line-height:23px;color:#000;letter-spacing:0.106px;">Add/Change/Delete</div>
<svg style="left:1554px;top:686px" width="28" height="28" viewBox="0 0 28 28"><defs><linearGradient id="g" x1="0" y1="0" x2="0" y2="1"><stop offset="0" stop-color="#4d8ff6"/><stop offset="1" stop-color="#3b72ed"/></linearGradient></defs><rect x="0" y="0" width="28" height="28" rx="6.5" fill="url(#g)"/><path d="M5.4 14.6 L12 21.6 L22.2 7" fill="none" stroke="#fff" stroke-width="3.8" stroke-linecap="round" stroke-linejoin="round"/></svg>
<div class="t" style="left:1586.8999999999999px;top:688.7px;font-size:23px;line-height:23px;color:#000;letter-spacing:0.525px;">Print</div>
<div class="t" style="left:1041.0px;top:740.5px;font-size:23px;line-height:23px;color:#000;letter-spacing:0.411px;">Visitation</div>
<svg style="left:1160px;top:736px" width="28" height="28" viewBox="0 0 28 28"><defs><linearGradient id="g" x1="0" y1="0" x2="0" y2="1"><stop offset="0" stop-color="#4d8ff6"/><stop offset="1" stop-color="#3b72ed"/></linearGradient></defs><rect x="0" y="0" width="28" height="28" rx="6.5" fill="url(#g)"/><path d="M5.4 14.6 L12 21.6 L22.2 7" fill="none" stroke="#fff" stroke-width="3.8" stroke-linecap="round" stroke-linejoin="round"/></svg>
<div class="t" style="left:1194.9px;top:738.7px;font-size:23px;line-height:23px;color:#000;letter-spacing:-0.467px;">View</div>
<svg style="left:1276px;top:736px" width="28" height="28" viewBox="0 0 28 28"><defs><linearGradient id="g" x1="0" y1="0" x2="0" y2="1"><stop offset="0" stop-color="#4d8ff6"/><stop offset="1" stop-color="#3b72ed"/></linearGradient></defs><rect x="0" y="0" width="28" height="28" rx="6.5" fill="url(#g)"/><path d="M5.4 14.6 L12 21.6 L22.2 7" fill="none" stroke="#fff" stroke-width="3.8" stroke-linecap="round" stroke-linejoin="round"/></svg>
<div class="t" style="left:1310.6000000000001px;top:738.7px;font-size:23px;line-height:23px;color:#000;letter-spacing:0.106px;">Add/Change/Delete</div>
<svg style="left:1554px;top:736px" width="28" height="28" viewBox="0 0 28 28"><defs><linearGradient id="g" x1="0" y1="0" x2="0" y2="1"><stop offset="0" stop-color="#4d8ff6"/><stop offset="1" stop-color="#3b72ed"/></linearGradient></defs><rect x="0" y="0" width="28" height="28" rx="6.5" fill="url(#g)"/><path d="M5.4 14.6 L12 21.6 L22.2 7" fill="none" stroke="#fff" stroke-width="3.8" stroke-linecap="round" stroke-linejoin="round"/></svg>
<div class="t" style="left:1586.8999999999999px;top:738.7px;font-size:23px;line-height:23px;color:#000;letter-spacing:0.525px;">Print</div>
<div class="t" style="left:1016.9px;top:790.5px;font-size:23px;line-height:23px;color:#000;letter-spacing:0.278px;">Attendance</div>
<svg style="left:1160px;top:786px" width="28" height="28" viewBox="0 0 28 28"><defs><linearGradient id="g" x1="0" y1="0" x2="0" y2="1"><stop offset="0" stop-color="#4d8ff6"/><stop offset="1" stop-color="#3b72ed"/></linearGradient></defs><rect x="0" y="0" width="28" height="28" rx="6.5" fill="url(#g)"/><path d="M5.4 14.6 L12 21.6 L22.2 7" fill="none" stroke="#fff" stroke-width="3.8" stroke-linecap="round" stroke-linejoin="round"/></svg>
<div class="t" style="left:1194.9px;top:788.7px;font-size:23px;line-height:23px;color:#000;letter-spacing:-0.467px;">View</div>
<svg style="left:1276px;top:786px" width="28" height="28" viewBox="0 0 28 28"><defs><linearGradient id="g" x1="0" y1="0" x2="0" y2="1"><stop offset="0" stop-color="#4d8ff6"/><stop offset="1" stop-color="#3b72ed"/></linearGradient></defs><rect x="0" y="0" width="28" height="28" rx="6.5" fill="url(#g)"/><path d="M5.4 14.6 L12 21.6 L22.2 7" fill="none" stroke="#fff" stroke-width="3.8" stroke-linecap="round" stroke-linejoin="round"/></svg>
<div class="t" style="left:1310.6000000000001px;top:788.7px;font-size:23px;line-height:23px;color:#000;letter-spacing:0.106px;">Add/Change/Delete</div>
<svg style="left:1554px;top:786px" width="28" height="28" viewBox="0 0 28 28"><defs><linearGradient id="g" x1="0" y1="0" x2="0" y2="1"><stop offset="0" stop-color="#4d8ff6"/><stop offset="1" stop-color="#3b72ed"/></linearGradient></defs><rect x="0" y="0" width="28" height="28" rx="6.5" fill="url(#g)"/><path d="M5.4 14.6 L12 21.6 L22.2 7" fill="none" stroke="#fff" stroke-width="3.8" stroke-linecap="round" stroke-linejoin="round"/></svg>
<div class="t" style="left:1586.8999999999999px;top:788.7px;font-size:23px;line-height:23px;color:#000;letter-spacing:0.525px;">Print</div>
<div class="t" style="left:979.6px;top:840.5px;font-size:23px;line-height:23px;color:#000;letter-spacing:0.238px;">Preaching Aids</div>
<svg style="left:1160px;top:836px" width="28" height="28" viewBox="0 0 28 28"><defs><linearGradient id="g" x1="0" y1="0" x2="0" y2="1"><stop offset="0" stop-color="#4d8ff6"/><stop offset="1" stop-color="#3b72ed"/></linearGradient></defs><rect x="0" y="0" width="28" height="28" rx="6.5" fill="url(#g)"/><path d="M5.4 14.6 L12 21.6 L22.2 7" fill="none" stroke="#fff" stroke-width="3.8" stroke-linecap="round" stroke-linejoin="round"/></svg>
<div class="t" style="left:1194.9px;top:838.7px;font-size:23px;line-height:23px;color:#000;letter-spacing:-0.467px;">View</div>
<svg style="left:1276px;top:836px" width="28" height="28" viewBox="0 0 28 28"><defs><linearGradient id="g" x1="0" y1="0" x2="0" y2="1"><stop offset="0" stop-color="#4d8ff6"/><stop offset="1" stop-color="#3b72ed"/></linearGradient></defs><rect x="0" y="0" width="28" height="28" rx="6.5" fill="url(#g)"/><path d="M5.4 14.6 L12 21.6 L22.2 7" fill="none" stroke="#fff" stroke-width="3.8" stroke-linecap="round" stroke-linejoin="round"/></svg>
<div class="t" style="left:1310.6000000000001px;top:838.7px;font-size:23px;line-height:23px;color:#000;letter-spacing:0.106px;">Add/Change/Delete</div>
<svg style="left:1554px;top:836px" width="28" height="28" viewBox="0 0 28 28"><defs><linearGradient id="g" x1="0" y1="0" x2="0" y2="1"><stop offset="0" stop-color="#4d8ff6"/><stop offset="1" stop-color="#3b72ed"/></linearGradient></defs><rect x="0" y="0" width="28" height="28" rx="6.5" fill="url(#g)"/><path d="M5.4 14.6 L12 21.6 L22.2 7" fill="none" stroke="#fff" stroke-width="3.8" stroke-linecap="round" stroke-linejoin="round"/></svg>
<div class="t" style="left:1586.8999999999999px;top:838.7px;font-size:23px;line-height:23px;color:#000;letter-spacing:0.525px;">Print</div>
<div class="t" style="left:983.4px;top:890.5px;font-size:23px;line-height:23px;color:#000;letter-spacing:0.346px;">Media Ministry</div>
<svg style="left:1160px;top:886px" width="28" height="28" viewBox="0 0 28 28"><defs><linearGradient id="g" x1="0" y1="0" x2="0" y2="1"><stop offset="0" stop-color="#4d8ff6"/><stop offset="1" stop-color="#3b72ed"/></linearGradient></defs><rect x="0" y="0" width="28" height="28" rx="6.5" fill="url(#g)"/><path d="M5.4 14.6 L12 21.6 L22.2 7" fill="none" stroke="#fff" stroke-width="3.8" stroke-linecap="round" stroke-linejoin="round"/></svg>
<div class="t" style="left:1194.9px;top:888.7px;font-size:23px;line-height:23px;color:#000;letter-spacing:-0.467px;">View</div>
<svg style="left:1276px;top:886px" width="28" height="28" viewBox="0 0 28 28"><defs><linearGradient id="g" x1="0" y1="0" x2="0" y2="1"><stop offset="0" stop-color="#4d8ff6"/><stop offset="1" stop-color="#3b72ed"/></linearGradient></defs><rect x="0" y="0" width="28" height="28" rx="6.5" fill="url(#g)"/><path d="M5.4 14.6 L12 21.6 L22.2 7" fill="none" stroke="#fff" stroke-width="3.8" stroke-linecap="round" stroke-linejoin="round"/></svg>
<div class="t" style="left:1310.6000000000001px;top:888.7px;font-size:23px;line-height:23px;color:#000;letter-spacing:0.106px;">Add/Change/Delete</div>
<svg style="left:1554px;top:886px" width="28" height="28" viewBox="0 0 28 28"><defs><linearGradient id="g" x1="0" y1="0" x2="0" y2="1"><stop offset="0" stop-color="#4d8ff6"/><stop offset="1" stop-color="#3b72ed"/></linearGradient></defs><rect x="0" y="0" width="28" height="28" rx="6.5" fill="url(#g)"/><path d="M5.4 14.6 L12 21.6 L22.2 7" fill="none" stroke="#fff" stroke-width="3.8" stroke-linecap="round" stroke-linejoin="round"/></svg>
<div class="t" style="left:1586.8999999999999px;top:888.7px;font-size:23px;line-height:23px;color:#000;letter-spacing:0.525px;">Print</div>
<svg style="left:1160px;top:936px" width="28" height="28" viewBox="0 0 28 28"><defs><linearGradient id="g" x1="0" y1="0" x2="0" y2="1"><stop offset="0" stop-color="#4d8ff6"/><stop offset="1" stop-color="#3b72ed"/></linearGradient></defs><rect x="0" y="0" width="28" height="28" rx="6.5" fill="url(#g)"/><path d="M5.4 14.6 L12 21.6 L22.2 7" fill="none" stroke="#fff" stroke-width="3.8" stroke-linecap="round" stroke-linejoin="round"/></svg>
<div class="t" style="left:1193.0px;top:938.7px;font-size:23px;line-height:23px;color:#000;letter-spacing:0.281px;">User can access Membership preferences</div>
<svg style="left:1160px;top:986px" width="28" height="28" viewBox="0 0 28 28"><defs><linearGradient id="g" x1="0" y1="0" x2="0" y2="1"><stop offset="0" stop-color="#4d8ff6"/><stop offset="1" stop-color="#3b72ed"/></linearGradient></defs><rect x="0" y="0" width="28" height="28" rx="6.5" fill="url(#g)"/><path d="M5.4 14.6 L12 21.6 L22.2 7" fill="none" stroke="#fff" stroke-width="3.8" stroke-linecap="round" stroke-linejoin="round"/></svg>
<div class="t" style="left:1193.0px;top:988.7px;font-size:23px;line-height:23px;color:#000;letter-spacing:0.33px;">User can modify Visitor Records</div>
<div class="r" style="left:814px;top:1026px;width:1130px;height:56px;background:linear-gradient(to bottom,#323232 0%,#2a2a2a 35%,#1f1f1f 55%,#2b2b2b 80%,#303030 100%)"></div>
<div class="t" style="left:827.4px;top:1042.9px;font-size:23px;line-height:23px;color:#fff;letter-spacing:0.583px;">Contributions</div>
<div class="r" style="left:1712px;top:1036px;width:104px;height:36px;background:#efefef;"></div>
<div class="r" style="left:1712px;top:1070px;width:104px;height:2px;background:#d0d0d0;"></div>
<div class="r" style="left:1811px;top:1042px;width:2px;height:24px;background:#cfcfcf;"></div>
<div class="t" style="left:1362.0px;width:800px;text-align:center;top:1042.9px;font-size:23px;line-height:23px;color:#000;">All</div>
<div class="r" style="left:1826px;top:1036px;width:104px;height:36px;background:#efefef;"></div>
<div class="r" style="left:1826px;top:1070px;width:104px;height:2px;background:#d0d0d0;"></div>
<div class="r" style="left:1925px;top:1042px;width:2px;height:24px;background:#cfcfcf;"></div>
<div class="t" style="left:1476.0px;width:800px;text-align:center;top:1042.9px;font-size:23px;line-height:23px;color:#000;">None</div>
<div class="t" style="left:1021.8px;top:1100.5px;font-size:23px;line-height:23px;color:#000;letter-spacing:0.21px;">Giving Unit</div>
<svg style="left:1160px;top:1096px" width="28" height="28" viewBox="0 0 28 28"><defs><linearGradient id="g" x1="0" y1="0" x2="0" y2="1"><stop offset="0" stop-color="#4d8ff6"/><stop offset="1" stop-color="#3b72ed"/></linearGradient></defs><rect x="0" y="0" width="28" height="28" rx="6.5" fill="url(#g)"/><path d="M5.4 14.6 L12 21.6 L22.2 7" fill="none" stroke="#fff" stroke-width="3.8" stroke-linecap="round" stroke-linejoin="round"/></svg>
<div class="t" style="left:1194.9px;top:1098.7px;font-size:23px;line-height:23px;color:#000;letter-spacing:-0.467px;">View</div>
<svg style="left:1276px;top:1096px" width="28" height="28" viewBox="0 0 28 28"><defs><linearGradient id="g" x1="0" y1="0" x2="0" y2="1"><stop offset="0" stop-color="#4d8ff6"/><stop offset="1" stop-color="#3b72ed"/></linearGradient></defs><rect x="0" y="0" width="28" height="28" rx="6.5" fill="url(#g)"/><path d="M5.4 14.6 L12 21.6 L22.2 7" fill="none" stroke="#fff" stroke-width="3.8" stroke-linecap="round" stroke-linejoin="round"/></svg>
<div class="t" style="left:1310.6000000000001px;top:1098.7px;font-size:23px;line-height:23px;color:#000;letter-spacing:0.106px;">Add/Change/Delete</div>
<svg style="left:1554px;top:1096px" width="28" height="28" viewBox="0 0 28 28"><defs><linearGradient id="g" x1="0" y1="0" x2="0" y2="1"><stop offset="0" stop-color="#4d8ff6"/><stop offset="1" stop-color="#3b72ed"/></linearGradient></defs><rect x="0" y="0" width="28" height="28" rx="6.5" fill="url(#g)"/><path d="M5.4 14.6 L12 21.6 L22.2 7" fill="none" stroke="#fff" stroke-width="3.8" stroke-linecap="round" stroke-linejoin="round"/></svg>
<div class="t" style="left:1586.8999999999999px;top:1098.7px;font-size:23px;line-height:23px;color:#000;letter-spacing:0.525px;">Print</div>
<div class="t" style="left:1005.5px;top:1150.5px;font-size:23px;line-height:23px;color:#000;letter-spacing:0.682px;">Contribution</div>
<svg style="left:1160px;top:1146px" width="28" height="28" viewBox="0 0 28 28"><defs><linearGradient id="g" x1="0" y1="0" x2="0" y2="1"><stop offset="0" stop-color="#4d8ff6"/><stop offset="1" stop-color="#3b72ed"/></linearGradient></defs><rect x="0" y="0" width="28" height="28" rx="6.5" fill="url(#g)"/><path d="M5.4 14.6 L12 21.6 L22.2 7" fill="none" stroke="#fff" stroke-width="3.8" stroke-linecap="round" stroke-linejoin="round"/></svg>
<div class="t" style="left:1194.9px;top:1148.7px;font-size:23px;line-height:23px;color:#000;letter-spacing:-0.467px;">View</div>
<svg style="left:1276px;top:1146px" width="28" height="28" viewBox="0 0 28 28"><defs><linearGradient id="g" x1="0" y1="0" x2="0" y2="1"><stop offset="0" stop-color="#4d8ff6"/><stop offset="1" stop-color="#3b72ed"/></linearGradient></defs><rect x="0" y="0" width="28" height="28" rx="6.5" fill="url(#g)"/><path d="M5.4 14.6 L12 21.6 L22.2 7" fill="none" stroke="#fff" stroke-width="3.8" stroke-linecap="round" stroke-linejoin="round"/></svg>
<div class="t" style="left:1310.6000000000001px;top:1148.7px;font-size:23px;line-height:23px;color:#000;letter-spacing:0.106px;">Add/Change/Delete</div>
<svg style="left:1554px;top:1146px" width="28" height="28" viewBox="0 0 28 28"><defs><linearGradient id="g" x1="0" y1="0" x2="0" y2="1"><stop offset="0" stop-color="#4d8ff6"/><stop offset="1" stop-color="#3b72ed"/></linearGradient></defs><rect x="0" y="0" width="28" height="28" rx="6.5" fill="url(#g)"/><path d="M5.4 14.6 L12 21.6 L22.2 7" fill="none" stroke="#fff" stroke-width="3.8" stroke-linecap="round" stroke-linejoin="round"/></svg>
<div class="t" style="left:1586.8999999999999px;top:1148.7px;font-size:23px;line-height:23px;color:#000;letter-spacing:0.525px;">Print</div>
<div class="t" style="left:989.6999999999999px;top:1200.5px;font-size:23px;line-height:23px;color:#000;letter-spacing:0.3px;">Giving History</div>
<svg style="left:1160px;top:1196px" width="28" height="28" viewBox="0 0 28 28"><defs><linearGradient id="g" x1="0" y1="0" x2="0" y2="1"><stop offset="0" stop-color="#4d8ff6"/><stop offset="1" stop-color="#3b72ed"/></linearGradient></defs><rect x="0" y="0" width="28" height="28" rx="6.5" fill="url(#g)"/><path d="M5.4 14.6 L12 21.6 L22.2 7" fill="none" stroke="#fff" stroke-width="3.8" stroke-linecap="round" stroke-linejoin="round"/></svg>
<div class="t" style="left:1194.9px;top:1198.7px;font-size:23px;line-height:23px;color:#000;letter-spacing:-0.467px;">View</div>
<svg style="left:1276px;top:1196px" width="28" height="28" viewBox="0 0 28 28"><defs><linearGradient id="g" x1="0" y1="0" x2="0" y2="1"><stop offset="0" stop-color="#4d8ff6"/><stop offset="1" stop-color="#3b72ed"/></linearGradient></defs><rect x="0" y="0" width="28" height="28" rx="6.5" fill="url(#g)"/><path d="M5.4 14.6 L12 21.6 L22.2 7" fill="none" stroke="#fff" stroke-width="3.8" stroke-linecap="round" stroke-linejoin="round"/></svg>
<div class="t" style="left:1310.6000000000001px;top:1198.7px;font-size:23px;line-height:23px;color:#000;letter-spacing:0.106px;">Add/Change/Delete</div>
<svg style="left:1554px;top:1196px" width="28" height="28" viewBox="0 0 28 28"><defs><linearGradient id="g" x1="0" y1="0" x2="0" y2="1"><stop offset="0" stop-color="#4d8ff6"/><stop offset="1" stop-color="#3b72ed"/></linearGradient></defs><rect x="0" y="0" width="28" height="28" rx="6.5" fill="url(#g)"/><path d="M5.4 14.6 L12 21.6 L22.2 7" fill="none" stroke="#fff" stroke-width="3.8" stroke-linecap="round" stroke-linejoin="round"/></svg>
<div class="t" style="left:1586.8999999999999px;top:1198.7px;font-size:23px;line-height:23px;color:#000;letter-spacing:0.525px;">Print</div>
<div class="t" style="left:1063.5px;top:1250.5px;font-size:23px;line-height:23px;color:#000;letter-spacing:0.22px;">Pledge</div>
<svg style="left:1160px;top:1246px" width="28" height="28" viewBox="0 0 28 28"><defs><linearGradient id="g" x1="0" y1="0" x2="0" y2="1"><stop offset="0" stop-color="#4d8ff6"/><stop offset="1" stop-color="#3b72ed"/></linearGradient></defs><rect x="0" y="0" width="28" height="28" rx="6.5" fill="url(#g)"/><path d="M5.4 14.6 L12 21.6 L22.2 7" fill="none" stroke="#fff" stroke-width="3.8" stroke-linecap="round" stroke-linejoin="round"/></svg>
<div class="t" style="left:1194.9px;top:1248.7px;font-size:23px;line-height:23px;color:#000;letter-spacing:-0.467px;">View</div>
<svg style="left:1276px;top:1246px" width="28" height="28" viewBox="0 0 28 28"><defs><linearGradient id="g" x1="0" y1="0" x2="0" y2="1"><stop offset="0" stop-color="#4d8ff6"/><stop offset="1" stop-color="#3b72ed"/></linearGradient></defs><rect x="0" y="0" width="28" height="28" rx="6.5" fill="url(#g)"/><path d="M5.4 14.6 L12 21.6 L22.2 7" fill="none" stroke="#fff" stroke-width="3.8" stroke-linecap="round" stroke-linejoin="round"/></svg>
<div class="t" style="left:1310.6000000000001px;top:1248.7px;font-size:23px;line-height:23px;color:#000;letter-spacing:0.106px;">Add/Change/Delete</div>
<svg style="left:1554px;top:1246px" width="28" height="28" viewBox="0 0 28 28"><defs><linearGradient id="g" x1="0" y1="0" x2="0" y2="1"><stop offset="0" stop-color="#4d8ff6"/><stop offset="1" stop-color="#3b72ed"/></linearGradient></defs><rect x="0" y="0" width="28" height="28" rx="6.5" fill="url(#g)"/><path d="M5.4 14.6 L12 21.6 L22.2 7" fill="none" stroke="#fff" stroke-width="3.8" stroke-linecap="round" stroke-linejoin="round"/></svg>
<div class="t" style="left:1586.8999999999999px;top:1248.7px;font-size:23px;line-height:23px;color:#000;letter-spacing:0.525px;">Print</div>
<div class="r" style="left:282px;top:1272px;width:1702px;height:2px;background:#5a5a5a;"></div>
<div class="r" style="left:282px;top:1274px;width:1702px;height:68px;background:linear-gradient(to bottom,#b5b5b5,#8e8e8e)"></div>
<div class="r" style="left:808px;top:1272px;width:1176px;height:8px;background:#4a9ff6;"></div>
<div class="r" style="left:814px;top:1272px;width:1164px;height:1px;background:#777;"></div>
<div class="r" style="left:304px;top:1289px;width:166px;height:40px;border-radius:10px;background:#d0d0d0;box-shadow:0 1px 1px rgba(0,0,0,0.25)"></div>
<div class="t" style="left:-13.0px;width:800px;text-align:center;top:1294.5px;font-size:23px;line-height:23px;color:#7b7b7b;">Revert</div>
<div class="r" style="left:1794px;top:1289px;width:148px;height:40px;border-radius:10px;background:#d0d0d0;box-shadow:0 1px 1px rgba(0,0,0,0.25)"></div>
<div class="t" style="left:1468.0px;width:800px;text-align:center;top:1294.5px;font-size:23px;line-height:23px;color:#7b7b7b;">Save</div>
</div></body></html>
